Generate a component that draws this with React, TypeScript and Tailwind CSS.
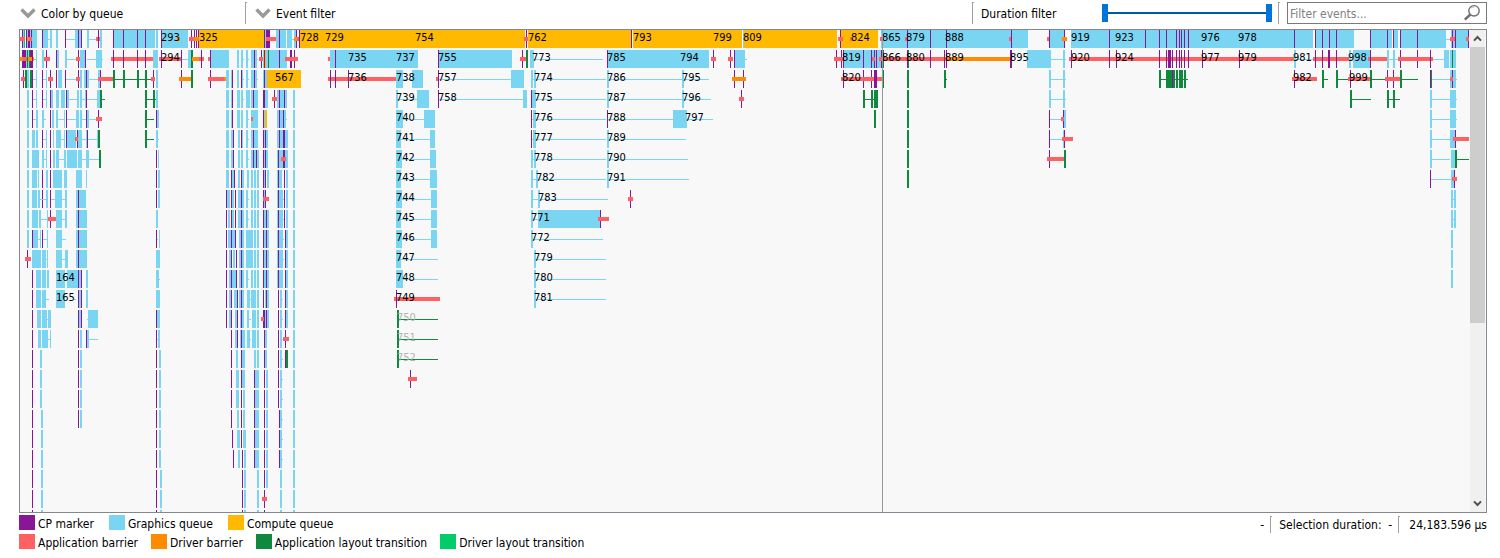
import React from "react";

/*
 * Timeline spans, one string per stacking level.
 * Each token is <kind><x>[,<width>]; the width defaults to 1.
 *   p CP marker        c graphics queue     y compute queue
 *   g layout change    G layout change tail l graphics tail
 *   r app barrier      o driver barrier     w gap     d driver layout
 */
const LEVELS: string[] = [
  "p22 c23 d24 p26 c27 p28 p29 c30 p31 c32,5 r20,5 o27,2 r29,3 p42 c43,5 l48,3 c50,2 c56,2 p65 l66,10 c75,3 p78 c79,2 p81 c87,2 l89,9 r96,4 p98 c100,2 c113,42 p113 p123 p137 p145 c156,2 c162,26 p161 o177,3 p191 r189,5 p194 p196 p198 o194,5 y199,65 p264 c265 p266 p267,3 r266,10 c276,10 p279 c287,5 l292,2 c294,3 p296 o294,3 r297,2 p299 y300,537 w525,3 p526 r524,4 w631,2 p631 w742 c743 y841,37 w837,2 p840 r838,5 r850,2 c881,147 r880,2 p907 r905,2 p930 p946 r1009,2 p1011 r1047,2 p1049 c1050,14 p1064 o1062,5 c1071,242 p1109 p1145 p1159 p1166 p1176 p1179 p1181 p1184 p1188 p1294 p1315 c1316,38 p1322 p1329 p1336 c1371,21 p1370 p1387 p1393 c1394,4 p1400 c1401,45 p1417 l1446,5 c1451,17 p1452 p1455 r1450,5 p1468 r1466,3",
  "p22,4 c26 g27 c28 g29 p30,3 o20,3 r23,4 o28,4 o33 l34,2 c36 c42,2 p46 r44,6 p56 c57,2 c65,2 l67,9 p78 r76,4 c80,5 p85 l87,9 c96,6 l102 r111,43 p113 p123 p137 p145 c153,5 r159,22 p161 p181 l182,6 c188,3 g191,2 o192,7 r199,5 p201 r208,3 p210 c211,18 c237,2 c241,2 l243 c246,2 l248 c251,6 p254 l257 p261 r259,4 c263 p264 y265 c266,21 g268 p279 p290,2 p294 r285,13 r328,2 c330,88 p335 c439,73 p438 p522 r520,6 g526,2 c530,4 l534,69 c608,101 p607 p713 r711,5 p730 r728,5 p734 c735,10 l745,2 p836 p841 p843 r834,9 c844,38 p863 p871 p874 p876 r872,3 p881 r879,3 r883,61 g883 p907 g908 p930 o944,67 p944 p946 p1010,2 c1027,24 l1051,12 c1063,2 l1065 r1069,225 p1071 p1109 p1116 p1159 p1166 p1168,3 p1172 p1176 p1179 p1181 p1184 p1188 p1202 p1239 c1294,2 l1296,17 r1313,36 p1315 p1322 p1328,2 p1336 c1349,2 c1353,17 r1368,19 p1370 c1387,2 l1389,4 c1393,2 l1395,3 p1400 p1417 r1398,35 p1430 l1433,11 c1444,5 c1450,6 g1452",
  "p23 g25,2 c27,2 g30,2 p32 r21,4 l33,3 c36 p42 l43,3 c46 p50 r48,5 p56 c58,4 p65 l66,10 p78 r76,4 c80,2 c84,2 p86 c87,2 l89,9 c98,2 p100 r98,15 g113,2 g123,2 g137,2 g145,2 G115,36 p153 r151,4 c156,2 p181 o179,12 g191,2 p210 r208,16 o224,2 c226,3 c231 p232 c237,2 p241 c242 l243 c246,2 l248 c251,6 p254 l257 c263 p264 c265,2 y267,34 r328,68 p330 p335 p348 c396,7 l403,9 c412,11 p438 r436,2 l439,72 c511,13 c531,2 l533 c534,2 l536,70 c607,2 l609,73 c682,2 l684,25 p734 p743 o732,14 p843 p863 p871 r841,41 p874,3 g883 g907,2 g944,2 G946 c1049,2 l1051,12 c1063,2 l1065 G1159,29 g1159,2 g1166,6 p1172 g1173,2 g1176,2 g1179,4 g1184,2 p1294 r1292,25 g1322,2 G1324,4 g1336,2 G1338,10 r1348,22 p1350 g1370,2 G1372,13 p1387 p1393 r1385,15 g1400,2 G1402,16 p1430 g1431 l1432,18 c1450,6 p1452 r1450,3 l1456",
  "c27,2 p32 l33,3 c36 p42 l43,3 c46 p50 c51,2 c56,3 c61,4 p66 c67,2 l69,8 c77,2 c80,2 l82,3 c85 p86 l87,10 c97,3 g100,2 G102,3 g145,2 G147,6 g153,2 G155 c156,2 c226,3 c231 p232 c237,3 c241,2 l243 c246,4 c251,7 p253 p263,2 c265,3 p274 r272,5 c277,10 p279 p284 c293,2 c396,2 l398,19 c417,12 p438 l439,84 c523,4 p531 c532,4 l536,70 c607,2 l609,73 c682,2 l684,27 p741 r739,5 g863,2 G865,6 g871,2 G873 g874,4 g907,2 c1049,2 l1051,12 c1063,2 l1065 g1350,2 G1352,19 g1387,2 g1393,2 G1389,11 c1430,2 l1432,18 c1450,6 l1456",
  "c27,2 p32 l33,3 c36,2 c42,2 l44,2 p50 c52,2 c56,2 l58,6 c64 p66 l67,9 c76,3 c80,2 l82,4 p86 c87,2 l89,8 p98 r96,6 g145,2 G147,7 p156 c157,2 c226,3 c231 p232 c237,3 c241,2 c246,2 l248 c251,7 r251,2 p263 c264 y265,2 c277,9 p279 p283 l286 c293,2 c396,7 l403,21 c424,11 p531 l532 c533,3 l536,70 p607 l608,65 c673,14 l687,26 g874,2 g907,2 p1049 l1050,12 p1063 r1061,3 c1064,2 c1430,2 l1432,18 c1450,6 l1456",
  "c27,2 c32,3 c36,2 p42 l43,3 c46 p50 c53 c56,5 l61,3 c64 p66 c67,9 p77 c78,4 r75,3 l82,4 c86 p87 l88,9 c97 g98,2 g145,2 G147,7 c156,2 l158 c226,3 c231,2 p233 c238,2 p241 c242 c246,2 l248 c251,7 p253 p263 c264 p265 c266,2 c277,11 p279 p283,2 c293,2 c396,5 l401,29 c430,5 p531 l532 c533,3 l536,70 c607,2 l609,77 g907,2 p1049 l1050,13 c1063 p1064 r1062,11 c1430,2 l1432,18 c1450,5 p1455 r1453,16",
  "c27,2 c32,7 c42,2 l44,2 c46 p50 c53,2 c56,3 l59,5 c64,2 c67,10 c78,4 l82,4 c86,3 l89,10 g99,2 p156 c158 c226,3 c231,3 p233 c238,2 c241,2 c246,2 l248 c251,8 p253 p256 c264,4 p263 p265 c277,9 p278 p283,2 r281,5 c286,2 c293,2 c396,6 l402,28 c430,6 c531,2 l533 c534,2 l536,70 c607,2 l609,79 g907,2 p1049 r1047,17 g1064,2 c1430,2 l1432,18 c1451,4 g1455,2 G1457,12",
  "c27,2 c32,5 c38 p42 c46,2 p50 c53,9 c64,3 c76,6 c86 p156 c158,2 c226,3 p231 c232,2 p234 c238,2 p241 c242,2 c247,2 c251,2 c254,2 c257,2 p263 c264 p265 c267,2 c277 p278 c279,3 p284 c286,2 c293,2 c396,5 l401,29 c430,7 c531,2 l533,3 c536,2 l538,68 c607,2 l609,80 g907,2 p1430 l1431,20 c1451,3 p1454 r1452,5",
  "c27,2 c32,5 c38,2 p42 l40,6 c46,2 p50 l51,4 c55,7 l62,3 c65,2 c76,10 p78 p156 c158,2 p226 c227,3 p231 c232,2 p235 c238,6 p241 c246,2 l248 c251,2 c254,2 c257,2 p263 c264 p265 r263,6 c277 p278 c279,4 l283 p284 c286,2 c293,2 c396,6 l402,29 c431,6 c531,2 l533,5 c538,2 l540,68 p630 r628,5 c1451,2 l1453 c1454,2",
  "c27,2 c32,6 c39,2 l41,6 c47 p50 r48,8 c56,6 l62,3 c65,2 c76,11 p78 c156,2 p226 c228,2 p231 c232,2 p235 c238,6 p241 c246,2 l248 c251,2 c254,2 c257,2 p263 c264,2 p266 c267,2 c277 p278 c279,4 l283 p284 c286,2 c293,2 c396,5 l401,30 c431,6 c531,2 l533,5 c538,62 p600 r598,11 c1451,2 l1453 c1454,2",
  "c27,2 p32 c33,5 l38,2 c40 p42 l43,4 c47 c56,6 l62,4 c76,11 p78 p156 l157 c159 p226 c228,8 p231 p235 c239,5 p241 c246,7 c254,2 c257,2 c264,5 p263 p266 c277,6 p278 l283 p285 c286,2 c293,2 c396,6 l402,29 c431,6 c531,2 l533,70 c1451,2",
  "p27 r25,6 c32,9 c42,4 l46 c47 c56,6 l62,3 c65,3 c76,11 p78 c156,4 p226 c229,3 p231 c233,2 p236 c239,5 p241 c246,7 c254,2 c257,2 c264,5 p263 p266 c277,6 p278 l283 p285 c286,2 c293,2 c396,5 l401,37 c534,2 l536,70 c1451,2",
  "p32 c36,5 c42,4 c47,2 c56,9 c67,11 p78 c79,2 p81 c86,2 c156,3 l159 p226 c229,2 p231 c232,4 p236 c239,5 p241 c246,2 l248 c251,2 c254,2 c257,2 c264,5 p263 p266 c277,6 p278 p285 c286,2 c293,2 c396,7 l403,35 c534,2 l536,70 c1451,2",
  "p32 c36,5 c42,4 l46,3 c56,9 l73,3 p78 c79,2 p81 c86,2 c156,4 p226 c229,2 p231 c234,3 p237 c239,5 p241 c247,3 l250 c251,5 c257,2 p263 c265,4 p266 p278 c280,2 l282 p285 c286,2 c293,2 r394,46 p396 c534,2 l536,70",
  "p32 c37,4 c42,5 l47 c48,3 p78 c79,2 p81 l87 c88,10 p156 c157,3 p226 c229,2 p231 c235,2 p237 c240,4 p241 c247,2 l249,2 c252,4 c257,2 p263,2 c265,4 p266 r261,3 p278 c280,2 l282 p285 c286,2 c293,2 g397,2 G399,39",
  "p32 c38,3 c42,6 l48,2 c50 p78 c80,2 p86 c87,2 l89,9 p156 l157 c158,2 p231 c235,2 p237 c240,5 p241 c247,3 l250 c252,4 c257,2 p264 c265,2 p278 c280,2 l282 p285 r283,6 c293,2 g397,2 G399,39",
  "p32 c40,2 p78 c80,2 p156 c159,2 p231 c236,2 p241 c242,3 c254,2 c257,2 p264 c265,2 p278 c280,2 l282 p285 g286,2 c293,2 g397,2 G399,39",
  "p32 c40,2 p78 c80,2 p156 c159,2 p231 c236,3 p241 c242,3 p254 c255,4 p264 c266,2 p278 c280,2 l282 c293,2 p410 r408,9",
  "p32 c40,2 p78 c80,2 p156 c159,2 p231 c236,3 p241 c243,2 p254 c255,4 p264 c266,2 p278 c280,2 l282 c293,2",
  "p32 c41,2 p78 c80,2 p156 c159,2 p231 c237,2 p241 c243,2 p254 c255,4 p264 c266,2 p279 c280,2 l282 c293,2",
  "p32 c41,2 p156 c159,2 p232 c237,3 p241 c243,3 p254 c255,4 p264 c266,2 p279 c280,2 l282 c293,2",
  "p32 c41,2 p156 c159,2 p233 c238,2 p242 c244,2 p254 c255,4 p264 c266,2 p279 c280,2 l282 c293,2",
  "p32 c41,2 p156 c160,2 p242 c244,2 c257,2 p264 c266,2 c280,2 c293,2",
  "p32 c41,2 p156 c160,2 p242 c244,2 c257,2 p264 r262,5 c280,2 c293,2",
  "p32 c41,2 p156 c160,2 p242 c244,2 c257,2 p264 c280,2 c293,2",
];

/* Event numbers, one string per level: <number>@<x> */
const LABELS: string[] = [
  "293@161 325@199 728@300 729@325 754@415 762@528 793@633 799@713 809@743 824@851 865@882 879@906 888@945 919@1071 923@1115 976@1201 978@1238",
  "294@161 735@348 737@396 755@438 773@532 785@607 794@680 819@842 866@882 880@906 889@945 895@1010 920@1071 924@1115 977@1201 979@1238 981@1293 998@1348",
  "567@275 736@348 738@396 757@438 774@534 786@607 795@682 820@842 982@1293 999@1349",
  "739@396 758@438 775@534 787@607 796@682",
  "740@396 776@534 788@607 797@685",
  "741@396 777@534 789@607",
  "742@396 778@534 790@607",
  "743@396 782@536 791@607",
  "744@396 783@538",
  "745@396 771@531",
  "746@396 772@531",
  "747@396 779@534",
  "164@56 748@396 780@534",
  "165@56 749@396 781@534",
  "750@397",
  "751@397",
  "752@397",
];

/* Layout transitions are numbered in grey */
const DIMMED = new Set(["750", "751", "752"]);

type Kind = { className: string; dy: number; height: number };

const KINDS: Record<string, Kind> = {
  p: { className: "fill-[#881798]", dy: 0, height: 18 },
  c: { className: "fill-[#79d5f1]", dy: 0, height: 18 },
  y: { className: "fill-[#ffb900]", dy: 0, height: 18 },
  g: { className: "fill-[#10893e]", dy: 0, height: 18 },
  d: { className: "fill-[#00cc6a]", dy: 0, height: 18 },
  w: { className: "fill-[#f8f8f8]", dy: 0, height: 18 },
  l: { className: "fill-[#79d5f1]", dy: 9, height: 1 },
  G: { className: "fill-[#10893e]", dy: 9, height: 1 },
  r: { className: "fill-[#ff6163]", dy: 7, height: 4 },
  o: { className: "fill-[#ff8c00]", dy: 7, height: 4 },
};

const ORIGIN_X = 20;
const LEVEL_PITCH = 20;

function Level({ spans, index }: { spans: string; index: number }) {
  return (
    <>
      {spans.split(" ").map((token, i) => {
        const kind = KINDS[token[0]];
        const [x, width = 1] = token.slice(1).split(",").map(Number);
        return (
          <rect
            key={i}
            className={kind.className}
            x={x - ORIGIN_X}
            y={index * LEVEL_PITCH + kind.dy}
            width={width}
            height={kind.height}
          />
        );
      })}
    </>
  );
}

function LevelLabels({ labels, index }: { labels: string; index: number }) {
  return (
    <>
      {labels.split(" ").map((token) => {
        const [id, x] = token.split("@");
        return (
          <text
            key={id}
            x={Number(x) - ORIGIN_X}
            y={index * LEVEL_PITCH + 11}
            className={DIMMED.has(id) ? "fill-[#b4b4b4]" : "fill-black"}
          >
            {id}
          </text>
        );
      })}
    </>
  );
}

function Timeline() {
  return (
    <svg
      role="img"
      aria-label="Event timeline"
      shapeRendering="crispEdges"
      className="block h-full min-w-0 flex-1 overflow-hidden text-[11px]"
    >
      {LEVELS.map((spans, i) => (
        <Level key={i} spans={spans} index={i} />
      ))}
      {LABELS.map((labels, i) => (
        <LevelLabels key={i} labels={labels} index={i} />
      ))}
      <rect x={862} y={0} width={1} height="100%" className="fill-[#999999]" />
    </svg>
  );
}

function Chevron() {
  return (
    <svg width="16" height="12" viewBox="0 0 16 12" className="shrink-0" aria-hidden="true">
      <path d="M1.5 1.5 L8 8 L14.5 1.5" fill="none" stroke="#999999" strokeWidth="3.4" />
    </svg>
  );
}

function Separator({ className }: { className: string }) {
  return <div aria-hidden="true" className={`w-[2px] shrink-0 border-t border-l border-[#a0a0a0] ${className}`} />;
}

const THUMB =
  "pointer-events-none absolute inset-0 m-0 h-full w-full appearance-none bg-transparent [&::-webkit-slider-thumb]:pointer-events-auto [&::-webkit-slider-thumb]:h-[18px] [&::-webkit-slider-thumb]:w-[6px] [&::-webkit-slider-thumb]:appearance-none [&::-webkit-slider-thumb]:bg-[#0074da]";

function DurationSlider() {
  return (
    <div className="relative flex h-[18px] w-[170px] items-center">
      <div className="h-[2px] w-full bg-[#005a9e]" />
      <input type="range" aria-label="Minimum duration" min={0} max={100} defaultValue={0} className={THUMB} />
      <input type="range" aria-label="Maximum duration" min={0} max={100} defaultValue={100} className={THUMB} />
    </div>
  );
}

function Toolbar() {
  return (
    <header className="flex h-[29px] shrink-0 items-start">
      <button type="button" className="flex h-[28px] w-[226px] items-center gap-[5px] pl-px text-left">
        <Chevron />
        Color by queue
      </button>
      <Separator className="mt-[2px] h-[22px]" />
      <button type="button" className="flex h-[28px] flex-1 items-center gap-[5px] pl-[8px] text-left">
        <Chevron />
        Event filter
      </button>
      <Separator className="mt-[2px] h-[22px]" />
      <div className="flex h-[26px] items-center pl-[7px]">
        <span className="w-[121px] pt-[2px]">Duration filter</span>
        <DurationSlider />
      </div>
      <Separator className="mt-[2px] mr-[7px] ml-[6px] h-[22px]" />
      <label className="mt-[2px] flex h-[22px] w-[200px] items-center border border-[#7a7a7a] bg-white pr-[5px] pl-[2px]">
        <input
          type="text"
          aria-label="Filter events"
          placeholder="Filter events..."
          className="min-w-0 flex-1 pt-[2px] outline-none placeholder:text-[#808080]"
        />
        <svg width="18" height="18" viewBox="0 0 18 18" fill="none" stroke="#6e6e6e" aria-hidden="true">
          <circle cx="11" cy="6.8" r="5.2" strokeWidth="1.4" />
          <path d="M8.2 3.8 Q9.4 2.9 11 3" stroke="#b0b0b0" strokeWidth="1" />
          <path d="M7.2 10.6 L1.8 15.6" strokeWidth="2.6" />
        </svg>
      </label>
    </header>
  );
}

function ScrollBar() {
  return (
    <div className="mr-px flex w-[15px] shrink-0 flex-col bg-[#f0f0f0]">
      <button type="button" aria-label="Scroll up" className="flex h-[17px] items-center justify-center">
        <svg width="9" height="7" viewBox="0 0 9 7" aria-hidden="true">
          <path d="M1 5.6 L4.5 2 L8 5.6" fill="none" stroke="#505050" strokeWidth="2" />
        </svg>
      </button>
      <div className="flex-1">
        <div className="h-8/13 bg-[#cdcdcd]" />
      </div>
      <button type="button" aria-label="Scroll down" className="flex h-[17px] items-center justify-center">
        <svg width="9" height="7" viewBox="0 0 9 7" aria-hidden="true">
          <path d="M1 1.4 L4.5 5 L8 1.4" fill="none" stroke="#505050" strokeWidth="2" />
        </svg>
      </button>
    </div>
  );
}

function LegendItem({ swatch, text }: { swatch: string; text: string }) {
  return (
    <li className="flex h-[15px] items-center gap-[3px] whitespace-nowrap">
      <span className={`h-[15px] w-[16px] ${swatch}`} />
      <span className="pt-[2px]">{text}</span>
    </li>
  );
}

function Footer() {
  return (
    <footer className="flex shrink-0 justify-between pt-[2px] pb-[9px]">
      <div className="flex flex-col gap-[4px]">
        <ul className="flex gap-[15px]">
          <LegendItem swatch="bg-[#881798]" text="CP marker" />
          <LegendItem swatch="bg-[#79d5f1]" text="Graphics queue" />
          <LegendItem swatch="bg-[#ffb900]" text="Compute queue" />
        </ul>
        <ul className="flex gap-[13px]">
          <LegendItem swatch="bg-[#ff6163]" text="Application barrier" />
          <LegendItem swatch="bg-[#ff8c00]" text="Driver barrier" />
          <LegendItem swatch="bg-[#10893e]" text="Application layout transition" />
          <LegendItem swatch="bg-[#00cc6a]" text="Driver layout transition" />
        </ul>
      </div>
      <div className="flex h-[18px] items-center whitespace-nowrap">
        <span className="pt-[2px]">-</span>
        <Separator className="mr-[7px] ml-[6px] h-[17px]" />
        <span className="pt-[2px]">Selection duration:&nbsp; -</span>
        <Separator className="mr-[9px] ml-[6px] h-[17px]" />
        <span className="pt-[2px]">24,183.596 µs</span>
      </div>
    </footer>
  );
}

export default function App() {
  return (
    <main className="flex h-screen flex-col bg-white pr-[13px] pl-[19px] font-['DejaVu_Sans_Condensed','Noto_Sans',sans-serif] text-[12px] leading-[16px] text-black">
      <Toolbar />
      <section className="flex min-h-0 flex-1 border border-[#828790] bg-[#f8f8f8]">
        <Timeline />
        <ScrollBar />
      </section>
      <Footer />
    </main>
  );
}
